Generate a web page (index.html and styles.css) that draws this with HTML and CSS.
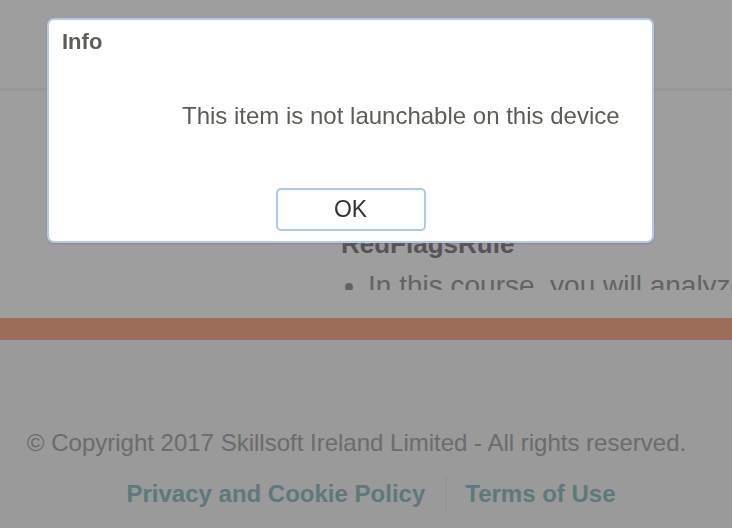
FILE: index.html
```html
<!DOCTYPE html>
<html lang="en">
<head>
    <meta charset="UTF-8">
    <title>Skillsoft</title>
    <link rel="stylesheet" href="styles.css">
</head>
<body>
    <div class="header"></div>

    <div class="content">
        <div class="course">
            <h2>RedFlagsRule</h2>
            <ul>
                <li>In this course, you will analyze</li>
            </ul>
        </div>
    </div>

    <div class="bar"></div>

    <div class="footer">
        <p class="copyright">&copy; Copyright 2017 Skillsoft Ireland Limited - All rights reserved.</p>
        <div class="links">
            <a href="#">Privacy and Cookie Policy</a>
            <span class="sep"></span>
            <a href="#">Terms of Use</a>
        </div>
    </div>

    <div class="overlay"></div>

    <div class="dialog">
        <div class="dialog-title">Info</div>
        <div class="dialog-msg">This item is not launchable on this device</div>
        <div class="dialog-buttons">
            <button class="ok">OK</button>
        </div>
    </div>
</body>
</html>
```

FILE: styles.css
```css
body {
    font-family: "Liberation Sans", Arial, sans-serif;
    margin: 0;
    padding: 0;
    background-color: #fff;
    height: 528px;
    overflow: hidden;
}

.header {
    height: 88px;
    border-bottom: 3px solid #f6f6f6;
    background-color: #fff;
}

.content {
    height: 199px;
    overflow: hidden;
    padding-left: 341px;
}

.course h2 {
    margin: 138px 0 0 0;
    font-size: 26px;
    line-height: 30px;
    color: #8a8a8a;
}

.course ul {
    margin: 10px 0 0 0;
    padding-left: 27px;
    font-size: 28px;
    line-height: 33px;
    color: #a0a0a0;
    white-space: nowrap;
}

.bar {
    margin-top: 28px;
    height: 22px;
    background-color: #fcb292;
}

.footer {
    background-color: #f8f8f8;
    height: 188px;
    text-align: center;
    padding-top: 1px;
}

.copyright {
    margin: 88px 0 0 0;
    padding-right: 19px;
    font-size: 24px;
    line-height: 28px;
    color: #aeaeae;
}

.links {
    display: flex;
    justify-content: center;
    align-items: center;
    margin-top: 19px;
    margin-left: 10px;
}

.links a {
    font-size: 24px;
    font-weight: bold;
    color: #98c4c8;
    text-decoration: none;
}

.links .sep {
    width: 2px;
    height: 35px;
    background-color: #f0f0f0;
    margin: 0 18px 0 20px;
}

.overlay {
    position: fixed;
    top: 0;
    left: 0;
    right: 0;
    bottom: 0;
    background-color: rgba(0, 0, 0, 0.38);
}

.dialog {
    position: fixed;
    top: 18px;
    left: 47px;
    width: 603px;
    height: 221px;
    background-color: #fff;
    border: 2px solid #b7c9e6;
    border-radius: 7px;
    box-shadow: 0 1px 2px rgba(80, 100, 140, 0.4);
}

.dialog-title {
    padding: 9px 0 0 13px;
    font-size: 22px;
    line-height: 25px;
    font-weight: bold;
    color: #5b5e56;
}

.dialog-msg {
    margin-top: 48px;
    padding-left: 133px;
    font-size: 24px;
    line-height: 28px;
    color: #5b5e56;
}

.dialog-buttons {
    display: flex;
    justify-content: center;
    margin-top: 58px;
}

.ok {
    width: 150px;
    height: 43px;
    background-color: #fff;
    border: 2px solid #aacbf1;
    border-radius: 5px;
    font-family: "Liberation Sans", Arial, sans-serif;
    font-size: 23px;
    color: #333;
}
```
